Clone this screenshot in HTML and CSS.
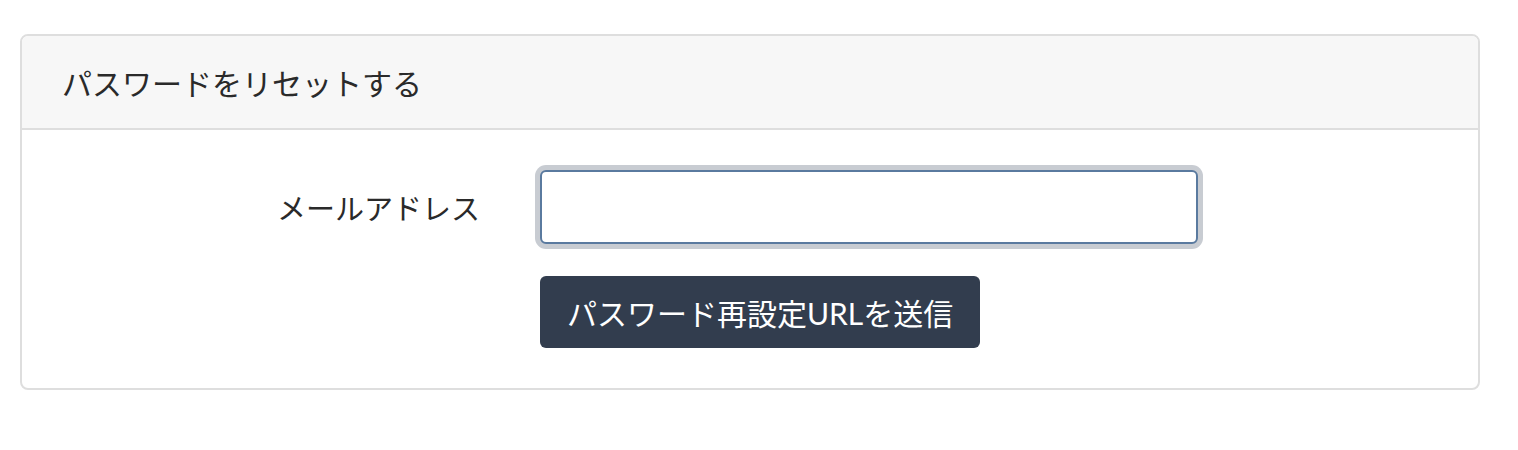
FILE: index.html
```html
<!DOCTYPE html>
<html lang="ja">
<head>
<meta charset="utf-8">
<title>パスワードをリセットする</title>
<link rel="stylesheet" href="styles.css">
</head>
<body>
<div class="page">
  <div class="card">
    <div class="card-header">パスワードをリセットする</div>
    <form class="card-body">
      <div class="row">
        <label class="label" for="email">メールアドレス</label>
        <input class="input" id="email" type="email">
      </div>
      <div class="row">
        <span></span>
        <div><button class="btn" type="button">パスワード再設定URLを送信</button></div>
      </div>
    </form>
  </div>
</div>
</body>
</html>
```
FILE: styles.css
```css
html, body {
  margin: 0;
  background: #fff;
}
body {
  font-family: Lato, "Noto Sans CJK JP", sans-serif;
  color: #222;
}
.page {
  padding: 34px 38px 0 20px;
}
.card {
  border: 2px solid #dedede;
  border-radius: 8px;
  overflow: hidden;
}
.card-header {
  height: 92px;
  display: flex;
  align-items: center;
  padding: 0 40px;
  background: #f7f7f7;
  border-bottom: 2px solid #dedede;
  font-size: 30px;
  color: #2a2a2a;
}
.card-body {
  padding: 40px 0 40px 0;
  display: flex;
  flex-direction: column;
  gap: 32px;
  margin: 0;
}
.row {
  display: grid;
  grid-template-columns: 458px 658px;
  column-gap: 60px;
  align-items: center;
}
.label {
  text-align: right;
  font-size: 29px;
  color: #2a2a2a;
}
.input {
  box-sizing: border-box;
  width: 658px;
  height: 74px;
  border: 2px solid #5a7a9f;
  border-radius: 6px;
  box-shadow: 0 0 0 5px #c8ccd2;
  outline: none;
  background: #fff;
  margin: 0;
}
.btn {
  height: 72px;
  padding: 0 27px;
  border: none;
  border-radius: 6px;
  background: #323d4e;
  color: #fff;
  font-family: Lato, "Noto Sans CJK JP", sans-serif;
  font-size: 30px;
  cursor: pointer;
}
```
